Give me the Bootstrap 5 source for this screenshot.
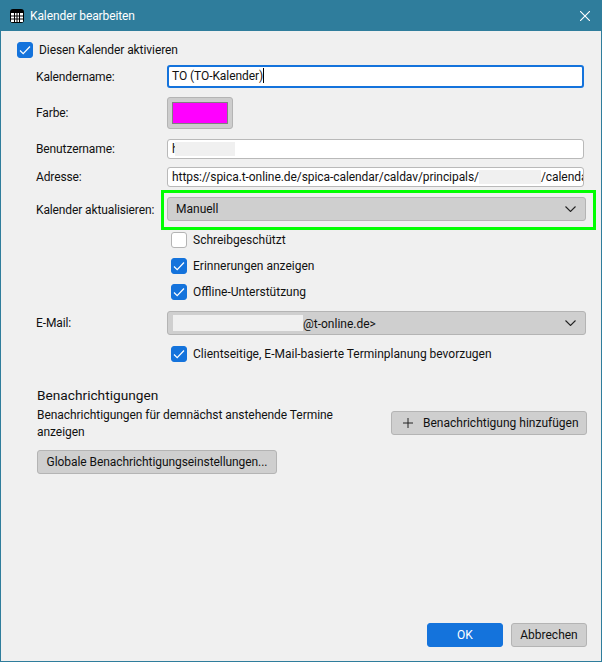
<!DOCTYPE html>
<html lang="de">
<head>
  <meta charset="UTF-8">
  <title>Kalender bearbeiten</title>
  <link href="https://cdn.jsdelivr.net/npm/bootstrap@5.3.0/dist/css/bootstrap.min.css" rel="stylesheet">
  <style>
    html, body { height: 100%; }
    body { background-color: #f0f0f0; color: #111; font-family: Roboto, "Liberation Sans", sans-serif; font-size: 12px; line-height: 16px; overflow: hidden; }
    .dlg { height: 662px; width: 602px; border: solid #2f7d9c; border-width: 0 1px 1px 1px; }
    .dlg-title { height: 31px; background-color: #2f7d9c; color: #fff; padding: 0 11px 0 9px; letter-spacing: -.1px; }
    .title-ico { margin-right: 6px; }
    .dlg-body { padding: 11px 15px 0 16px; }
    .lbl { width: 131px; margin-left: 19px; flex: none; letter-spacing: -.12px; }
    .tight { letter-spacing: -.08px; }
    .fld { width: 417px; height: 20px; padding: 0 4px; font-size: 12px; line-height: 18px; border: 1px solid #b9b9b9; border-radius: 3px; color: #111; white-space: nowrap; overflow: hidden; letter-spacing: -.07px; }
    .fld-focus { height: 23px; border: 2px solid #1473dc; line-height: 19px; padding: 0 3px; }
    .cursor { display: inline-block; width: 1px; height: 15px; background: #000; vertical-align: -3px; }
    .hide-box { display: inline-block; background: #f0f0f0; height: 14px; vertical-align: -3px; }
    .hide-user { width: 60px; }
    .hide-path { width: 62px; }
    .hide-mail { width: 130px; height: 16px; }
    .cut-h { width: 3px; }
    .swatch-btn { width: 66px; height: 32px; padding: 4px; background: #cdcdcd; border: 1px solid #b4b4b4; border-radius: 3px; }
    .swatch { height: 100%; background: #ff00ff; border: 1px solid #808080; }
    .drop { width: 419px; height: 24px; padding: 0 9px 0 8px; background: #cfcfcf; border: 1px solid #b4b4b4; border-radius: 3px; color: #111; font-size: 12px; }
    .mail-drop { padding-left: 5px; }
    .update-wrap { margin: 0 0 0 -6px; border: 3px solid #00ff00; width: 435px; height: 40px; padding: 4px 7px 0 3px; }
    .chk { width: 16px; height: 16px; margin: 0; flex: none; border-radius: 3px; border: 1px solid #b4b4b4; background-color: #fff; }
    .chk:checked { background-color: #1473dc; border-color: #1473dc; background-size: 16px 16px; background-image: url("data:image/svg+xml,%3csvg xmlns='http://www.w3.org/2000/svg' viewBox='0 0 16 16'%3e%3cpath fill='none' stroke='%23fff' stroke-width='1.2' d='M3 8.5l3.2 3.2L13 4.5'/%3e%3c/svg%3e"); }
    .chk:focus { box-shadow: none; border-color: #b4b4b4; }
    .opts { margin-left: 154px; }
    .chk-row { gap: 6px; }
    .tool-btn { height: 24px; padding: 0 9px; font-size: 12px; line-height: 16px; background: #cfcfcf; border: 1px solid #b4b4b4; border-radius: 3px; color: #111; }
    .add-btn { width: 196px; padding: 0 0 0 11px; gap: 10px; margin-top: 4px; }
    .global-btn { width: 240px; padding: 0; letter-spacing: -.07px; margin-top: 9px; }
    .ok-btn { width: 76px; height: 24px; padding: 0; font-size: 12px; background: #1473dc; border: 1px solid #1473dc; border-radius: 3px; color: #fff; }
    .cancel-btn { width: 76px; padding: 0; }
    .head-txt { font-size: 13.7px; }
    .notify { margin-left: 20px; width: 550px; margin-top: 25px; }
    .notify-row { margin-top: 4px; }
    .notify-txt { width: 320px; line-height: 17px; letter-spacing: -.05px; }
    .foot { position: absolute; left: 0; right: 0; bottom: 14px; padding-right: 14px; }
    .sp2 { margin-top: 2px; }
    .sp3 { margin-top: 3px; }
    .sp7 { margin-top: 7px; }
    .sp8 { margin-top: 8px; }
    .sp9 { margin-top: 9px; }
    .sp10 { margin-top: 10px; }
    .sp11 { margin-top: 11px; }
  </style>
</head>
<body>
<div class="dlg position-relative">
  <!-- Titelleiste -->
  <div class="dlg-title d-flex align-items-center">
    <svg width="14" height="14" viewBox="0 0 14 14" class="title-ico">
      <rect width="14" height="14" rx="3" fill="#000"/>
      <path d="M1 4h12v8.5a.5.5 0 0 1-.5.5h-11a.5.5 0 0 1-.5-.5z" fill="#fff"/>
      <path d="M4.5 4v9M7 4v9M9.5 4v9M1 7h12M1 10h12" stroke="#000" stroke-width="1"/>
    </svg>
    <span class="flex-grow-1">Kalender bearbeiten</span>
    <svg width="10" height="10" viewBox="0 0 10 10"><path d="M0 0l10 10M10 0l-10 10" stroke="#fff" stroke-width="1.1"/></svg>
  </div>

  <div class="dlg-body">
    <div class="d-flex align-items-center chk-row">
      <input class="form-check-input chk" type="checkbox" checked>
      <label class="tight">Diesen Kalender aktivieren</label>
    </div>

    <div class="d-flex align-items-center sp7">
      <span class="lbl">Kalendername:</span>
      <div class="form-control fld fld-focus">TO (TO-Kalender)<span class="cursor"></span></div>
    </div>

    <div class="d-flex align-items-center sp9">
      <span class="lbl">Farbe:</span>
      <div class="swatch-btn"><div class="swatch"></div></div>
    </div>

    <div class="d-flex align-items-center sp10">
      <span class="lbl">Benutzername:</span>
      <div class="form-control fld"><span class="d-inline-block overflow-hidden align-bottom cut-h">h</span><span class="hide-box hide-user"></span></div>
    </div>

    <div class="d-flex align-items-center sp8">
      <span class="lbl">Adresse:</span>
      <div class="form-control fld">https://spica.t-online.de/spica-calendar/caldav/principals/<span class="hide-box hide-path"></span>/calendar</div>
    </div>

    <div class="d-flex align-items-center sp3">
      <span class="lbl">Kalender aktualisieren:</span>
      <div class="update-wrap">
        <div class="drop d-flex align-items-center justify-content-between">
          <span>Manuell</span>
          <svg width="11" height="6" viewBox="0 0 11 6"><path d="M0.5 0.5l5 5 5-5" fill="none" stroke="#222" stroke-width="1.1"/></svg>
        </div>
      </div>
    </div>

    <div class="opts">
      <div class="d-flex align-items-center chk-row sp2">
        <input class="form-check-input chk" type="checkbox">
        <label>Schreibgeschützt</label>
      </div>
      <div class="d-flex align-items-center chk-row sp10">
        <input class="form-check-input chk" type="checkbox" checked>
        <label>Erinnerungen anzeigen</label>
      </div>
      <div class="d-flex align-items-center chk-row sp10">
        <input class="form-check-input chk" type="checkbox" checked>
        <label>Offline-Unterstützung</label>
      </div>
    </div>

    <div class="d-flex align-items-center sp11">
      <span class="lbl">E-Mail:</span>
      <div class="drop mail-drop d-flex align-items-center justify-content-between">
        <span><span class="hide-box hide-mail"></span>@t-online.de&gt;</span>
        <svg width="11" height="6" viewBox="0 0 11 6"><path d="M0.5 0.5l5 5 5-5" fill="none" stroke="#222" stroke-width="1.1"/></svg>
      </div>
    </div>

    <div class="opts d-flex align-items-center chk-row sp11">
      <input class="form-check-input chk" type="checkbox" checked>
      <label>Clientseitige, E-Mail-basierte Terminplanung bevorzugen</label>
    </div>

    <div class="notify">
      <div class="head-txt">Benachrichtigungen</div>
      <div class="d-flex justify-content-between align-items-start notify-row">
        <div class="notify-txt">Benachrichtigungen für demnächst anstehende Termine anzeigen</div>
        <button type="button" class="btn tool-btn add-btn d-flex align-items-center">
          <svg width="10" height="10" viewBox="0 0 10 10"><path d="M5 0v10M0 5h10" stroke="#222" stroke-width="1"/></svg>
          Benachrichtigung hinzufügen
        </button>
      </div>
      <button type="button" class="btn tool-btn global-btn">Globale Benachrichtigungseinstellungen...</button>
    </div>
  </div>

  <div class="foot d-flex justify-content-end gap-2">
    <button type="button" class="btn ok-btn">OK</button>
    <button type="button" class="btn tool-btn cancel-btn">Abbrechen</button>
  </div>
</div>
<script src="https://cdn.jsdelivr.net/npm/bootstrap@5.3.0/dist/js/bootstrap.bundle.min.js"></script>
</body>
</html>
